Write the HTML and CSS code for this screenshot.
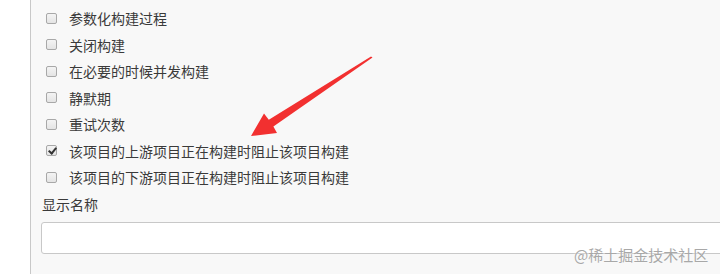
FILE: index.html
```html
<!DOCTYPE html>
<html lang="zh-CN">

<head>
  <meta charset="UTF-8">
  <meta name="viewport" content="width=device-width, initial-scale=1.0">
  <title>构建触发器</title>
  <link rel="stylesheet" href="styles.css">
</head>

<body>
  <div class="page">
    <div class="side"></div>
    <div class="main">
      <!--构建选项-->
      <div class="options">
        <label class="opt"><input type="checkbox"><span>参数化构建过程</span></label>
        <label class="opt"><input type="checkbox"><span>关闭构建</span></label>
        <label class="opt"><input type="checkbox"><span>在必要的时候并发构建</span></label>
        <label class="opt"><input type="checkbox"><span>静默期</span></label>
        <label class="opt"><input type="checkbox"><span>重试次数</span></label>
        <label class="opt"><input type="checkbox" checked><span>该项目的上游项目正在构建时阻止该项目构建</span></label>
        <label class="opt"><input type="checkbox"><span>该项目的下游项目正在构建时阻止该项目构建</span></label>
      </div>

      <!--显示名称-->
      <div class="field">
        <div class="field-title">显示名称</div>
        <input type="text" class="text-input">
      </div>
    </div>
  </div>

  <!--标注箭头-->
  <svg class="arrow" width="720" height="274" viewBox="0 0 720 274">
    <polygon fill="#f23030" points="251,136 264,113.5 268.8,119.8 371,56.5 372.5,57.5 273.4,126.6 277,133"/>
  </svg>

  <div class="watermark">@稀土掘金技术社区</div>
</body>

</html>
```

FILE: styles.css
```css
* {
  box-sizing: border-box;
}

body {
  margin: 0;
  width: 720px;
  height: 274px;
  overflow: hidden;
  background: #fff;
  font-family: "Noto Sans CJK SC", "Liberation Sans", sans-serif;
  font-size: 14px;
  color: #3a3a3a;
}

.page {
  display: flex;
  height: 274px;
}

.side {
  width: 30px;
  flex: none;
  background: #fff;
}

.main {
  flex: 1;
  border-left: 1px solid #c8c8c8;
  background: #f8f8f8;
  padding: 5px 0 0 10px;
}

/*选项列表*/
.options {
  display: flex;
  flex-direction: column;
}

.opt {
  display: flex;
  align-items: center;
  height: 26.5px;
  padding-left: 5px;
}

.opt input[type="checkbox"] {
  appearance: none;
  -webkit-appearance: none;
  width: 11px;
  height: 11px;
  margin: 0 12px 0 0;
  border: 1px solid #a8a8a8;
  border-radius: 2px;
  background: linear-gradient(#f4f4f4, #e4e4e4);
  position: relative;
}

.opt input[type="checkbox"]:checked::after {
  content: "";
  position: absolute;
  left: 3px;
  top: 0px;
  width: 3px;
  height: 6px;
  border: solid #333;
  border-width: 0 2px 2px 0;
  transform: rotate(40deg);
}

.opt span {
  line-height: 20px;
}

/*显示名称*/
.field {
  padding-top: 3px;
}

.field-title {
  padding-left: 1px;
  line-height: 20px;
}

.text-input {
  display: block;
  width: 700px;
  height: 32px;
  margin-top: 8px;
  border: 1px solid #c8c8c8;
  border-radius: 3px;
  background: #fff;
}

.arrow {
  position: absolute;
  left: 0;
  top: 0;
  pointer-events: none;
}

.watermark {
  position: absolute;
  left: 574px;
  top: 245px;
  font-size: 15px;
  line-height: 20px;
  color: #a8a8a8;
  text-shadow: 0 0 2px #fff;
}
```
